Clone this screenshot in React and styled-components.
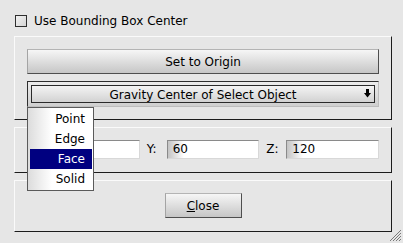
import React, { useState } from "react"
import styled, { createGlobalStyle } from "styled-components"

const GlobalStyle = createGlobalStyle`
* {
    margin: 0;
    padding: 0;
    box-sizing: border-box;
}

body {
    width: 403px;
    height: 243px;
    overflow: hidden;
    background-color: #e6e6e6;
    font-family: "DejaVu Sans", "Liberation Sans", sans-serif;
    font-size: 12px;
    color: #000;
}
`

const Window = styled.div`
position: relative;
width: 403px;
height: 243px;
padding: 15px 11px 0 14px;
display: flex;
flex-direction: column;
`

const CheckRow = styled.label`
display: flex;
align-items: center;
gap: 7px;
height: 12px;
margin-left: 1px;
margin-bottom: 9px;
`

const CheckBox = styled.span`
width: 12px;
height: 12px;
border: 1px solid #2e2e2e;
background: linear-gradient(135deg, #f2f2f2, #d4d4d4);
`

const Group = styled.div`
width: 378px;
height: ${(p) => p.h}px;
margin-bottom: 7px;
padding: 12px 12px 0 12px;
border-top: 1px solid #fafafa;
border-left: 1px solid #fafafa;
border-right: 1px solid #1c1c1c;
border-bottom: 1px solid #1c1c1c;
display: flex;
flex-direction: column;
align-items: ${(p) => (p.center ? "center" : "stretch")};
`

const Button = styled.button`
height: 25px;
width: ${(p) => (p.w ? `${p.w}px` : "auto")};
font-family: inherit;
font-size: 12px;
color: #000;
background: linear-gradient(#f6f6f6, #c6c6c6);
border-top: 1px solid #b4b4b4;
border-left: 1px solid #a4a4a4;
border-right: 1px solid #4e4e4e;
border-bottom: 1px solid #4e4e4e;
`

const Combo = styled.div`
position: relative;
margin-top: 7px;
height: 26px;
padding: 3px;
border-top: 1px solid #2e2e2e;
border-left: 1px solid #2e2e2e;
border-right: 1px solid #bdbdbd;
border-bottom: 1px solid #bdbdbd;
background: linear-gradient(#ececec, #cfcfcf);
`

const ComboInner = styled.div`
height: 18px;
padding-top: 1px;
border: 1px solid #2a2a2a;
background: linear-gradient(#f4f4f4, #d2d2d2);
display: flex;
align-items: center;
justify-content: center;
position: relative;
`

const Arrow = styled.svg`
position: absolute;
right: 3px;
top: 3px;
`

const Popup = styled.ul`
position: absolute;
left: -1px;
top: 25px;
width: 67px;
height: 84px;
padding: 1px 1px 0 2px;
list-style: none;
border: 1px solid #5a5a5a;
background: linear-gradient(90deg, #dcdcdc, #ffffff 24px);
z-index: 2;
`

const Item = styled.li`
height: 20px;
padding-right: 7px;
text-align: right;
line-height: 20px;
color: ${(p) => (p.active ? "#fff" : "#000")};
background: ${(p) => (p.active ? "#000080" : "transparent")};
`

const Fields = styled.div`
display: grid;
grid-template-columns: repeat(3, 1fr);
column-gap: 7px;
`

const Cell = styled.div`
display: flex;
align-items: center;
`

const FieldLabel = styled.span`
width: 20px;
height: 19px;
line-height: 19px;
flex-shrink: 0;
`

const Field = styled.div`
flex: 1;
height: 19px;
padding-left: 5px;
line-height: 17px;
border-top: 1px solid #8a8a8a;
border-left: 1px solid #8a8a8a;
border-right: 1px solid #d8d8d8;
border-bottom: 1px solid #d8d8d8;
background: linear-gradient(90deg, #c4c4c4, #ffffff 16px);
`

const Grip = styled.svg`
position: absolute;
right: 1px;
bottom: 1px;
`

export default function App() {
    const [choice] = useState("Face")
    const modes = ["Point", "Edge", "Face", "Solid"]
    const coords = [
        { label: "", value: "" },
        { label: "Y:", value: "60" },
        { label: "Z:", value: "120" }
    ]

    return (
        <Window>
            <GlobalStyle />
            <CheckRow>
                <CheckBox />
                <span>Use Bounding Box Center</span>
            </CheckRow>

            <Group h={84}>
                <Button>Set to Origin</Button>
                <Combo>
                    <ComboInner>
                        Gravity Center of Select Object
                        <Arrow width="7" height="9" viewBox="0 0 7 9">
                            <rect x="2" y="0" width="3" height="4" fill="#000" />
                            <polygon points="0,4 7,4 3.5,8.5" fill="#000" />
                        </Arrow>
                    </ComboInner>
                    <Popup>
                        {modes.map((m) => (
                            <Item key={m} active={m === choice}>{m}</Item>
                        ))}
                    </Popup>
                </Combo>
            </Group>

            <Group h={46}>
                <Fields>
                    {coords.map((c, i) => (
                        <Cell key={i}>
                            <FieldLabel>{c.label}</FieldLabel>
                            <Field>{c.value}</Field>
                        </Cell>
                    ))}
                </Fields>
            </Group>

            <Group h={52} center>
                <Button w={77}><u>C</u>lose</Button>
            </Group>

            <Grip width="12" height="12" viewBox="0 0 12 12">
                <path d="M11 3 L3 11 M11 6 L6 11 M11 9 L9 11 M11 0 L0 11" stroke="#7a7a7a" strokeWidth="1" />
            </Grip>
        </Window>
    )
}
